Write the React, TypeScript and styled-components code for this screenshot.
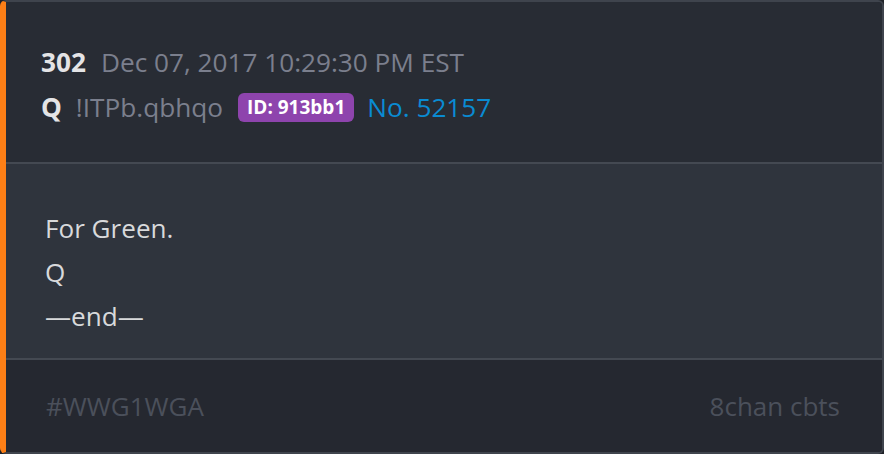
import React from "react";
import styled, { createGlobalStyle } from "styled-components";

const Global = createGlobalStyle`
  html, body { margin: 0; padding: 0; background: #1f2228; }
  body { font-family: "Open Sans", "Noto Sans", sans-serif; }
  * { box-sizing: border-box; }
`;

const Card = styled.article`
  width: 884px;
  height: 454px;
  display: flex;
  flex-direction: column;
  border: 2px solid #3f444d;
  border-left: 6px solid #fd7f16;
  border-radius: 6px;
  overflow: hidden;
  background: #282c34;
`;

const Header = styled.header`
  display: flex;
  flex-direction: column;
  padding: 38px 36px 32px 35px;
  background: #282c34;
  border-bottom: 2px solid #444952;
`;

const MetaRow = styled.div`
  display: flex;
  align-items: center;
  height: 45px;
  line-height: 45px;
  font-size: 26.2px;
  white-space: nowrap;
`;

const Strong = styled.span<{ $gap: number }>`
  font-weight: 700;
  color: #e4e4e6;
  margin-right: ${(p) => p.$gap}px;
`;

const Muted = styled.span<{ $gap?: number }>`
  color: #7b7f8d;
  margin-right: ${(p) => p.$gap ?? 0}px;
`;

const Badge = styled.span`
  display: inline-flex;
  align-items: center;
  height: 29px;
  padding: 0 9px;
  border-radius: 6px;
  background: #8e44ad;
  color: #ffffff;
  font-weight: 700;
  font-size: 19px;
  line-height: 29px;
  margin-right: 13px;
`;

const PostLink = styled.span`
  color: #0a8bd2;
`;

const Body = styled.section`
  flex: 1;
  display: flex;
  flex-direction: column;
  padding: 42px 36px 18px 39px;
  background: #2f343d;
  border-bottom: 2px solid #444952;
`;

const Line = styled.div`
  font-size: 26.1px;
  line-height: 44px;
  color: #d8d9db;
`;

const Footer = styled.footer`
  display: flex;
  justify-content: space-between;
  align-items: center;
  height: 92px;
  padding: 0 42px 0 40px;
  background: #252830;
  font-size: 26px;
  color: #4b505b;
`;

export default function App() {
  return (
    <>
      <Global />
      <Card>
        <Header>
          <MetaRow>
            <Strong $gap={15}>302</Strong>
            <Muted>Dec 07, 2017 10:29:30 PM EST</Muted>
          </MetaRow>
          <MetaRow>
            <Strong $gap={14}>Q</Strong>
            <Muted $gap={15}>!ITPb.qbhqo</Muted>
            <Badge>ID: 913bb1</Badge>
            <PostLink>No. 52157</PostLink>
          </MetaRow>
        </Header>
        <Body>
          <Line>For Green.</Line>
          <Line>Q</Line>
          <Line>—end—</Line>
        </Body>
        <Footer>
          <span>#WWG1WGA</span>
          <span>8chan cbts</span>
        </Footer>
      </Card>
    </>
  );
}
